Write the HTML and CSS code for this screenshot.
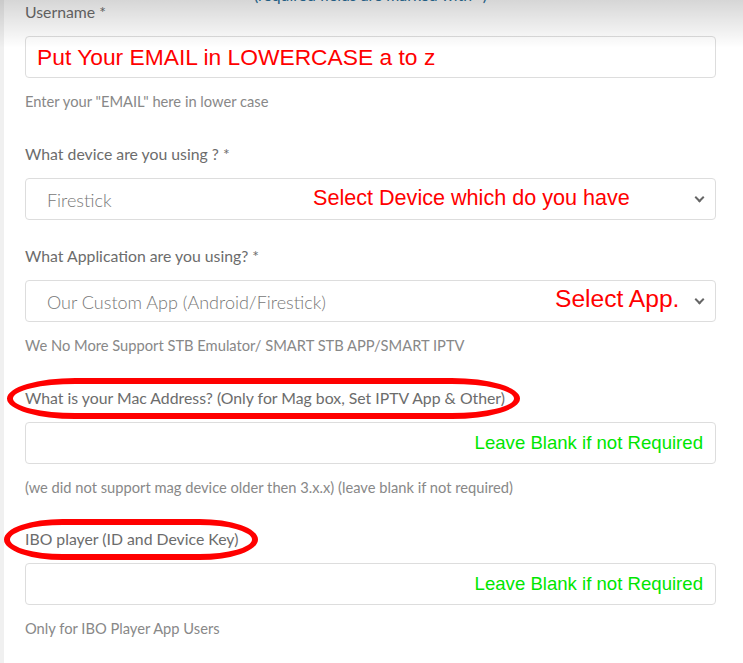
FILE: index.html
```html
<!DOCTYPE html>
<html lang="en">
<head>
    <meta charset="UTF-8">
    <meta name="viewport" content="width=device-width, initial-scale=1.0">
    <title>Signup Form</title>
    <link rel="stylesheet" href="styles.css">
</head>
<body>
    <div class="card">
        <p class="note">(required fields are marked with *)</p>

        <div class="group">
            <label for="username">Username *</label>
            <input type="text" id="username" class="field field-red" value="Put Your EMAIL in LOWERCASE a to z">
            <p class="help">Enter your "EMAIL" here in lower case</p>
        </div>

        <div class="group">
            <label for="device">What device are you using ? *</label>
            <div class="select-wrap">
                <select id="device" class="field select">
                    <option>Firestick</option>
                    <option>Android Box</option>
                    <option>Smart TV</option>
                    <option>Mag Box</option>
                </select>
                <span class="hint hint-device">Select Device which do you have</span>
            </div>
        </div>

        <div class="group">
            <label for="app">What Application are you using? *</label>
            <div class="select-wrap">
                <select id="app" class="field select">
                    <option>Our Custom App (Android/Firestick)</option>
                    <option>IBO Player</option>
                    <option>Set IPTV</option>
                </select>
                <span class="hint hint-app">Select App.</span>
            </div>
            <p class="help">We No More Support STB Emulator/ SMART STB APP/SMART IPTV</p>
        </div>

        <div class="group">
            <div class="circled">
                <label for="mac">What is your Mac Address? (Only for Mag box, Set IPTV App &amp; Other)</label>
                <span class="ring ring-mac"></span>
            </div>
            <input type="text" id="mac" class="field field-green" placeholder="Leave Blank if not Required">
            <p class="help">(we did not support mag device older then 3.x.x) (leave blank if not required)</p>
        </div>

        <div class="group">
            <div class="circled">
                <label for="ibo">IBO player (ID and Device Key)</label>
                <span class="ring ring-ibo"></span>
            </div>
            <input type="text" id="ibo" class="field field-green" placeholder="Leave Blank if not Required">
            <p class="help">Only for IBO Player App Users</p>
        </div>
    </div>
</body>
</html>
```

FILE: styles.css
```css
body {
    margin: 0;
    height: 100vh;
    background-color: #f0f0f0;
    font-family: Lato, "Open Sans", sans-serif;
    overflow: hidden;
}
body::before {
    content: "";
    position: absolute;
    top: 0;
    left: 0;
    right: 0;
    height: 48px;
    background: linear-gradient(to bottom, rgba(0,0,0,0.16), rgba(0,0,0,0));
    pointer-events: none;
    z-index: 5;
}
.card {
    display: flow-root;
    margin-left: 4px;
    background-color: white;
    padding: 0 27px 0 21px;
    height: 100vh;
    box-sizing: border-box;
}
.note {
    margin: -15px 0 -3px;
    font-size: 15.8px;
    line-height: 20px;
    text-align: center;
    color: #2a6f9b;
}
.group {
    margin-bottom: 26.5px;
}
.group:last-child {
    margin-bottom: 0;
}
label {
    display: block;
    font-size: 15.8px;
    line-height: 20px;
    color: #6c6c6c;
    margin-bottom: 14px;
}
.field {
    display: block;
    width: 100%;
    height: 42px;
    box-sizing: border-box;
    border: 1px solid #ddd;
    border-radius: 4px;
    background-color: white;
    outline: none;
    margin: 0;
}
.field-red {
    padding: 0 11px;
    font-family: "Liberation Sans", Arial, sans-serif;
    font-size: 22.8px;
    color: #ff0000;
}
.field-green {
    padding: 0 12px;
    text-align: right;
    font-family: "Liberation Sans", Arial, sans-serif;
    font-size: 18.6px;
}
.field-green::placeholder {
    color: #00e600;
    opacity: 1;
}
.select-wrap {
    position: relative;
}
.select {
    appearance: none;
    -webkit-appearance: none;
    padding: 2px 21px 0;
    font-family: Lato, "Open Sans", sans-serif;
    font-weight: 300;
    font-size: 18px;
    color: #777;
}
.select-wrap::after {
    content: "";
    position: absolute;
    right: 13px;
    top: 16px;
    width: 5px;
    height: 5px;
    border-right: 2px solid #666;
    border-bottom: 2px solid #666;
    transform: rotate(45deg);
    pointer-events: none;
}
.hint {
    position: absolute;
    font-family: "Liberation Sans", Arial, sans-serif;
    color: #ff0000;
    pointer-events: none;
    line-height: 1;
}
.hint-device {
    left: 288px;
    top: 9px;
    font-size: 21.6px;
}
.hint-app {
    left: 530px;
    top: 7px;
    font-size: 24.6px;
}
.help {
    margin: 13px 0 0;
    padding-bottom: 6px;
    font-size: 14.7px;
    line-height: 20px;
    color: #888;
}
.circled {
    position: relative;
}
.ring {
    position: absolute;
    border: 6px solid #ff0000;
    box-sizing: border-box;
    pointer-events: none;
}
.ring-mac {
    left: -18px;
    top: -10px;
    width: 513px;
    height: 41px;
    border-radius: 70px / 21px;
}
.ring-ibo {
    left: -21px;
    top: -10px;
    width: 254px;
    height: 41px;
    border-radius: 60px / 21px;
}
```
